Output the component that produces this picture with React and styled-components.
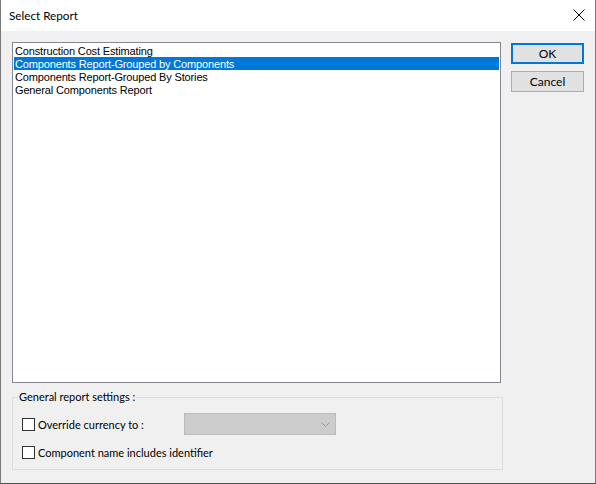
import React, { useState } from "react";
import styled, { createGlobalStyle } from "styled-components";

const GlobalStyle = createGlobalStyle`
  html, body {
    margin: 0;
    padding: 0;
    background: #f0f0f0;
  }
  * {
    box-sizing: border-box;
  }
`;

const Window = styled.div`
  width: 596px;
  height: 484px;
  display: flex;
  flex-direction: column;
  background: #f0f0f0;
  border: 1px solid #7a7a7a;
  border-top: none;
  border-bottom-color: #505050;
  font-family: Lato, "Noto Sans", sans-serif;
  color: #000;
`;

const TitleBar = styled.div`
  height: 31px;
  flex: none;
  display: flex;
  align-items: center;
  justify-content: space-between;
  background: #fff;
  padding: 0 9px 1px 8px;
`;

const Title = styled.span`
  font-size: 11.7px;
`;

const CloseButton = styled.button`
  border: none;
  background: none;
  padding: 0;
  margin-right: 1px;
  width: 12px;
  height: 12px;
  display: flex;
`;

const Body = styled.div`
  flex: 1;
  display: flex;
  gap: 8px;
  padding: 11px 11px 0 11px;
`;

const LeftColumn = styled.div`
  width: 491px;
  display: flex;
  flex-direction: column;
`;

const ReportList = styled.ul`
  list-style: none;
  margin: 0;
  width: 489px;
  height: 341px;
  padding: 1px 1px;
  background: #fff;
  border: 1px solid #828790;
  font-family: "Liberation Sans", Arial, sans-serif;
  font-size: 11px;
  letter-spacing: -0.15px;
`;

const ReportItem = styled.li`
  height: 13px;
  line-height: 14px;
  padding-left: 1px;
  white-space: nowrap;
  cursor: default;
  background: ${(p) => (p.$selected ? "#0078d7" : "transparent")};
  color: ${(p) => (p.$selected ? "#fff" : "#000")};
`;

const Group = styled.fieldset`
  margin: 7px 0 0 0;
  padding: 9px 9px 0 9px;
  height: 80px;
  border: 1px solid #dcdcdc;
  border-radius: 0;
`;

const Legend = styled.legend`
  font-size: 11px;
  padding: 0 1px;
  margin-left: -4px;
  line-height: 14px;
`;

const SettingRow = styled.label`
  display: flex;
  align-items: center;
  height: ${(p) => p.$h || 22}px;
  margin-bottom: ${(p) => p.$gap || 0}px;
  font-size: 11px;
`;

const Box = styled.span`
  width: 13px;
  height: 13px;
  border: 1px solid #333;
  background: #fff;
  margin-right: 3px;
  flex: none;
`;

const SettingText = styled.span`
  width: ${(p) => (p.$w ? `${p.$w}px` : "auto")};
`;

const Combo = styled.div`
  width: 152px;
  height: 22px;
  background: #cccccc;
  border: 1px solid #bcbcbc;
  display: flex;
  align-items: center;
  justify-content: flex-end;
  padding-right: 5px;
`;

const ButtonColumn = styled.div`
  display: flex;
  flex-direction: column;
  gap: 7px;
  padding-top: 1px;
`;

const DialogButton = styled.button`
  width: 73px;
  height: 21px;
  padding: 0;
  background: #e1e1e1;
  border: ${(p) => (p.$default ? "2px solid #0078d7" : "1px solid #adadad")};
  font-family: Lato, "Noto Sans", sans-serif;
  font-size: 12px;
  line-height: 1;
  color: #000;
`;

const reports = [
  "Construction Cost Estimating",
  "Components Report-Grouped by Components",
  "Components Report-Grouped By Stories",
  "General Components Report",
];

export default function App() {
  const [selected, setSelected] = useState(1);

  return (
    <>
      <GlobalStyle />
      <Window>
        <TitleBar>
          <Title>Select Report</Title>
          <CloseButton aria-label="Close">
            <svg width="12" height="12" viewBox="0 0 12 12">
              <path d="M0.5 0.5 L11.5 11.5 M11.5 0.5 L0.5 11.5" stroke="#000" strokeWidth="1" fill="none" />
            </svg>
          </CloseButton>
        </TitleBar>
        <Body>
          <LeftColumn>
            <ReportList>
              {reports.map((r, i) => (
                <ReportItem key={r} $selected={i === selected} onClick={() => setSelected(i)}>
                  {r}
                </ReportItem>
              ))}
            </ReportList>
            <Group>
              <Legend>General report settings :</Legend>
              <SettingRow $h={22} $gap={9}>
                <Box />
                <SettingText $w={146}>Override currency to :</SettingText>
                <Combo>
                  <svg width="9" height="5" viewBox="0 0 9 5">
                    <path d="M0.5 0.5 L4.5 4.5 L8.5 0.5" stroke="#9a9a9a" strokeWidth="1" fill="none" />
                  </svg>
                </Combo>
              </SettingRow>
              <SettingRow $h={16}>
                <Box />
                <SettingText>Component name includes identifier</SettingText>
              </SettingRow>
            </Group>
          </LeftColumn>
          <ButtonColumn>
            <DialogButton $default>OK</DialogButton>
            <DialogButton>Cancel</DialogButton>
          </ButtonColumn>
        </Body>
      </Window>
    </>
  );
}
